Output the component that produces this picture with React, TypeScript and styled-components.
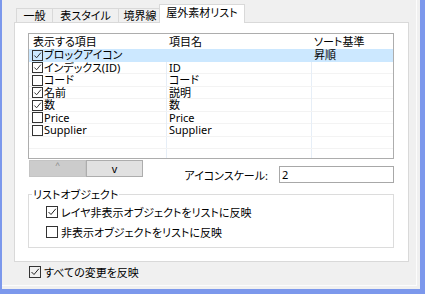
import React from 'react';
import styled, { createGlobalStyle } from 'styled-components';

const GlobalStyle = createGlobalStyle`
  html, body {
    margin: 0;
    padding: 0;
    background: #f0f0f0;
  }
  body {
    font-family: "Noto Sans", "Noto Sans CJK JP", sans-serif;
    font-size: 11px;
    font-feature-settings: "palt";
    color: #000;
  }
`;

const Window = styled.div`
  width: 425px;
  height: 294px;
  box-sizing: border-box;
  background: #f0f0f0;
  border-left: 2px solid #7c98ec;
  border-right: 5px solid #7c98ec;
  border-bottom: 5px solid #7c98ec;
  overflow: hidden;
`;

const Frame = styled.div`
  height: 286px;
  margin-right: 3px;
  box-sizing: border-box;
  border-right: 1px solid #fcfcfc;
  border-bottom: 1px solid #fcfcfc;
  padding: 4px 0 0 12px;
  display: flex;
  flex-direction: column;
`;

const TabStrip = styled.div`
  display: flex;
  align-items: flex-end;
  height: 18px;
  padding-left: 2px;
`;

const Tab = styled.div<{ $w: number; $active?: boolean }>`
  box-sizing: border-box;
  width: ${p => p.$w}px;
  height: ${p => (p.$active ? 19 : 14)}px;
  margin: ${p => (p.$active ? '0 0 -1px -2px' : '0 -1px 0 0')};
  border: 1px solid #d9d9d9;
  border-bottom: none;
  background: ${p => (p.$active ? '#ffffff' : '#f0f0f0')};
  position: relative;
  z-index: ${p => (p.$active ? 1 : 0)};
  display: flex;
  align-items: center;
  justify-content: center;
  white-space: nowrap;
  line-height: 12px;
  padding-bottom: ${p => (p.$active ? 2 : 0)}px;
`;

const Panel = styled.div`
  width: 395px;
  height: 240px;
  box-sizing: border-box;
  border: 1px solid #d9d9d9;
  background: #ffffff;
  padding: 10px 0 0 13px;
  display: flex;
  flex-direction: column;
`;

const ListBox = styled.div`
  width: 366px;
  height: 126px;
  box-sizing: border-box;
  border: 1px solid #adadad;
  background: #fff;
  overflow: hidden;
`;

const Row = styled.div<{ $header?: boolean; $selected?: boolean }>`
  display: grid;
  grid-template-columns: 138px 145px 1fr;
  box-sizing: border-box;
  height: ${p => (p.$header ? 15 : 12.5)}px;
  line-height: ${p => (p.$header ? 14 : 12)}px;
  background: ${p => (p.$selected ? '#cce8ff' : 'transparent')};
  border-bottom: ${p => (p.$header ? 'none' : `1px solid ${p.$selected ? '#cce8ff' : '#f3f3f3'}`)};
`;

const Cell = styled.div<{ $first?: boolean; $lined?: boolean }>`
  display: flex;
  align-items: center;
  gap: 1px;
  padding-left: ${p => (p.$first ? 3 : 2)}px;
  border-right: ${p => (p.$lined ? '1px solid #e6eef7' : 'none')};
  white-space: nowrap;
`;

const Box = styled.span<{ $size: number }>`
  box-sizing: border-box;
  flex: none;
  width: ${p => p.$size}px;
  height: ${p => p.$size}px;
  border: 1px solid #333333;
  display: inline-flex;
  align-items: center;
  justify-content: center;
`;

const Controls = styled.div`
  width: 366px;
  display: flex;
  justify-content: space-between;
  align-items: flex-start;
`;

const ArrowGroup = styled.div`
  display: flex;
  margin: 1px 0 0 1px;
`;

const ArrowButton = styled.div<{ $disabled?: boolean }>`
  box-sizing: border-box;
  width: 57px;
  height: 17px;
  border: 1px solid ${p => (p.$disabled ? '#c4c4c4' : '#adadad')};
  background: ${p => (p.$disabled ? '#cccccc' : '#e1e1e1')};
  color: ${p => (p.$disabled ? '#8c8c8c' : '#000')};
  font-size: ${p => (p.$disabled ? 9 : 11)}px;
  display: flex;
  justify-content: center;
  align-items: ${p => (p.$disabled ? 'flex-start' : 'center')};
  line-height: ${p => (p.$disabled ? 11 : 12)}px;
  font-family: "Liberation Sans", sans-serif;
`;

const ScaleGroup = styled.div`
  display: flex;
  align-items: center;
  margin-top: 7px;
`;

const ScaleLabel = styled.span`
  margin-right: 11px;
  white-space: nowrap;
`;

const ScaleInput = styled.input`
  box-sizing: border-box;
  width: 115px;
  height: 17px;
  border: 1px solid #a8a8a8;
  padding: 0 0 0 2px;
  margin: 0;
  font: inherit;
  font-size: 11px;
  outline: none;
  background: #fff;
`;

const GroupBox = styled.fieldset`
  width: 366px;
  box-sizing: border-box;
  margin: 5px 0 0 0;
  padding: 1px 0 5px 17px;
  border: 1px solid #dcdcdc;
  min-width: 0;
`;

const GroupLegend = styled.legend`
  margin-left: -14px;
  padding: 0 1px;
  line-height: 13px;
`;

const OptionRow = styled.label<{ $h?: number }>`
  display: flex;
  align-items: center;
  gap: 3px;
  height: ${p => p.$h ?? 20}px;
  white-space: nowrap;
`;

const BottomBar = styled.div`
  padding-left: 15px;
`;

const Check = ({ checked, size = 12 }: { checked: boolean; size?: number }) => (
  <Box $size={size}>
    {checked && (
      <svg width={size - 2} height={size - 2} viewBox="0 0 10 10">
        <polyline points="1.5,5 4,7.5 8.8,1.8" fill="none" stroke="#222" strokeWidth="1" />
      </svg>
    )}
  </Box>
);

const tabs = [
  { label: '一般', w: 37 },
  { label: '表スタイル', w: 67 },
  { label: '境界線', w: 44 },
  { label: '屋外素材リスト', w: 86, active: true },
];

const rows = [
  { checked: true, name: 'ブロックアイコン', field: '', sort: '昇順', selected: true },
  { checked: true, name: 'インデックス(ID)', field: 'ID', sort: '' },
  { checked: false, name: 'コード', field: 'コード', sort: '' },
  { checked: true, name: '名前', field: '説明', sort: '' },
  { checked: true, name: '数', field: '数', sort: '' },
  { checked: false, name: 'Price', field: 'Price', sort: '' },
  { checked: false, name: 'Supplier', field: 'Supplier', sort: '' },
];

export default function App() {
  return (
    <>
      <GlobalStyle />
      <Window>
        <Frame>
          <TabStrip>
            {tabs.map(t => (
              <Tab key={t.label} $w={t.w} $active={t.active}>
                {t.label}
              </Tab>
            ))}
          </TabStrip>
          <Panel>
            <ListBox>
              <Row $header>
                <Cell $first style={{ paddingLeft: 4 }}>表示する項目</Cell>
                <Cell>項目名</Cell>
                <Cell>ソート基準</Cell>
              </Row>
              {rows.map(r => (
                <Row key={r.name} $selected={r.selected}>
                  <Cell $first $lined={!r.selected}>
                    <Check checked={r.checked} size={11} />
                    {r.name}
                  </Cell>
                  <Cell $lined={!r.selected}>{r.field}</Cell>
                  <Cell>{r.sort}</Cell>
                </Row>
              ))}
              {[0, 1].map(i => (
                <Row key={`empty-${i}`}>
                  <Cell $first $lined />
                  <Cell $lined />
                  <Cell />
                </Row>
              ))}
            </ListBox>
            <Controls>
              <ArrowGroup>
                <ArrowButton $disabled>^</ArrowButton>
                <ArrowButton>v</ArrowButton>
              </ArrowGroup>
              <ScaleGroup>
                <ScaleLabel>アイコンスケール:</ScaleLabel>
                <ScaleInput readOnly value="2" />
              </ScaleGroup>
            </Controls>
            <GroupBox>
              <GroupLegend>リストオブジェクト</GroupLegend>
              <OptionRow>
                <Check checked />
                レイヤ非表示オブジェクトをリストに反映
              </OptionRow>
              <OptionRow>
                <Check checked={false} />
                非表示オブジェクトをリストに反映
              </OptionRow>
            </GroupBox>
          </Panel>
          <BottomBar>
            <OptionRow>
              <Check checked />
              すべての変更を反映
            </OptionRow>
          </BottomBar>
        </Frame>
      </Window>
    </>
  );
}
